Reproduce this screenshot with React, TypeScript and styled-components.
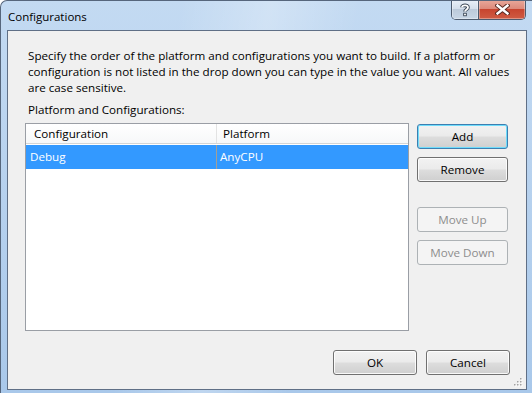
import * as React from "react";
import styled, { createGlobalStyle, css } from "styled-components";

const GlobalStyle = createGlobalStyle`
  html, body {
    margin: 0;
    padding: 0;
  }
  body {
    font-family: "Open Sans", "Noto Sans", sans-serif;
    font-size: 11.65px;
    color: #000;
    background: #ffffff;
  }
`;

const Window = styled.div`
  width: 532px;
  height: 393px;
  box-sizing: border-box;
  display: flex;
  flex-direction: column;
  border-left: 1px solid #56667c;
  border-top: 1px solid #56667c;
  border-top-left-radius: 7px;
  overflow: hidden;
  background:
    linear-gradient(100deg, rgba(255, 255, 255, 0) 30%, rgba(255, 255, 255, 0.25) 45%, rgba(255, 255, 255, 0) 60%),
    linear-gradient(180deg, #c3daf2 0%, #b9d3ef 40%, #a9c8ea 100%);
`;

const TitleBar = styled.div`
  height: 29px;
  display: flex;
  justify-content: space-between;
  align-items: flex-start;
  flex-shrink: 0;
`;

const Title = styled.div`
  padding: 8px 0 0 7px;
  line-height: 16px;
  font-size: 11.5px;
  color: #000;
`;

const CaptionGroup = styled.div`
  display: flex;
  margin: -1px 6px 0 0;
  height: 20px;
  box-sizing: border-box;
  border: 1px solid #4d5b6e;
  border-top: none;
  border-radius: 0 0 5px 5px;
  overflow: hidden;
`;

const CaptionButton = styled.div<{ $close?: boolean }>`
  display: flex;
  align-items: center;
  justify-content: center;
  width: ${({ $close }) => ($close ? "46px" : "26px")};
  box-shadow: inset 0 0 0 1px rgba(255, 255, 255, 0.35);
  ${({ $close }) =>
    $close
      ? css`
          background: linear-gradient(180deg, #e9a99b 0%, #dd8a7b 45%, #c8452f 50%, #cf5c44 100%);
        `
      : css`
          border-right: 1px solid #4d5b6e;
          background: linear-gradient(180deg, #e9f0f8 0%, #d5dfeb 45%, #bccada 50%, #c9d7e6 100%);
        `}
`;

const Client = styled.div`
  flex: 1;
  margin: 0 5px 3px 6px;
  border: 1px solid #5f6f86;
  background: #f0f0f0;
  position: relative;
  display: flex;
  flex-direction: column;
`;

const Description = styled.div`
  margin: 17px 0 0 20px;
  line-height: 16px;
`;

const Label = styled.div`
  margin: 6px 0 0 20px;
  line-height: 16px;
`;

const Body = styled.div`
  display: flex;
  align-items: flex-start;
  gap: 8px;
  margin: 5px 0 0 17px;
`;

const List = styled.div`
  width: 384px;
  height: 208px;
  box-sizing: border-box;
  border: 1px solid #9a9ea5;
  background: #ffffff;
`;

const Columns = styled.div`
  display: grid;
  grid-template-columns: 191px 1fr;
`;

const HeaderRow = styled(Columns)`
  height: 20px;
  box-sizing: border-box;
  border-bottom: 1px solid #d5d5d5;
  background: linear-gradient(180deg, #ffffff 0%, #f7f8f9 100%);
`;

const HeaderCell = styled.div<{ $first?: boolean }>`
  padding-left: ${({ $first }) => ($first ? "8px" : "6px")};
  line-height: 19px;
  border-right: ${({ $first }) => ($first ? "1px solid #e3e3e3" : "none")};
`;

const DataRow = styled(Columns)<{ $selected?: boolean }>`
  margin-top: 1px;
  height: 24px;
  background: ${({ $selected }) => ($selected ? "#3399ff" : "transparent")};
  color: ${({ $selected }) => ($selected ? "#ffffff" : "#000000")};
`;

const DataCell = styled.div<{ $first?: boolean }>`
  padding-left: ${({ $first }) => ($first ? "4px" : "3px")};
  line-height: 23px;
  border-right: ${({ $first }) => ($first ? "1px solid #a39f96" : "none")};
`;

const ButtonColumn = styled.div`
  display: flex;
  flex-direction: column;
  margin-top: 1px;
  width: 91px;
`;

const Button = styled.button<{ $default?: boolean; $gap?: number }>`
  height: 25px;
  width: 100%;
  margin-top: ${({ $gap }) => $gap ?? 0}px;
  padding: 0;
  box-sizing: border-box;
  font-family: inherit;
  font-size: 11.65px;
  color: #000;
  border: 1px solid #707070;
  border-radius: 3px;
  background: linear-gradient(180deg, #f2f2f2 0%, #ebebeb 48%, #dddddd 52%, #cfcfcf 100%);
  box-shadow: inset 0 0 0 1px rgba(255, 255, 255, 0.85);
  ${({ $default }) =>
    $default &&
    css`
      border-color: #3c7fb1;
      box-shadow: inset 0 0 0 1px #6fdcfb;
    `}
  &:disabled {
    color: #8d8d8d;
    border-color: #adb2b5;
    background: #f4f4f4;
    box-shadow: none;
  }
`;

const Footer = styled.div`
  display: flex;
  justify-content: flex-end;
  gap: 9px;
  margin: 19px 16px 0 0;
`;

const FooterButton = styled(Button)`
  width: 84px;
`;

const Grip = styled.svg`
  position: absolute;
  right: 3px;
  bottom: 2px;
`;

function HelpGlyph() {
  return (
    <svg width="12" height="14" viewBox="0 0 12 14">
      <path
        d="M3 4.2 C3 1.8 9 1.6 9 4.4 C9 6.4 6 6.4 6 8.6"
        fill="none"
        stroke="#3b4756"
        strokeWidth="3.6"
      />
      <path
        d="M3 4.2 C3 1.8 9 1.6 9 4.4 C9 6.4 6 6.4 6 8.6"
        fill="none"
        stroke="#ffffff"
        strokeWidth="1.8"
      />
      <rect x="4.2" y="9.8" width="3.6" height="3.4" fill="#3b4756" />
      <rect x="5.1" y="10.7" width="1.8" height="1.6" fill="#ffffff" />
    </svg>
  );
}

function CloseGlyph() {
  return (
    <svg width="15" height="11" viewBox="0 0 15 11">
      <path d="M2.5 1.5 L12.5 9.5 M12.5 1.5 L2.5 9.5" stroke="#5a2a22" strokeWidth="4.4" strokeLinecap="square" />
      <path d="M2.5 1.5 L12.5 9.5 M12.5 1.5 L2.5 9.5" stroke="#ffffff" strokeWidth="2.4" strokeLinecap="square" />
    </svg>
  );
}

function SizeGrip() {
  const dots = [
    [9, 1],
    [6, 4],
    [9, 4],
    [3, 7],
    [6, 7],
    [9, 7],
  ];
  return (
    <Grip width="12" height="10" viewBox="0 0 12 10">
      {dots.map(([x, y]) => (
        <React.Fragment key={`${x}-${y}`}>
          <rect x={x + 1} y={y + 1} width="1.5" height="1.5" fill="#ffffff" />
          <rect x={x} y={y} width="1.5" height="1.5" fill="#a3a3a3" />
        </React.Fragment>
      ))}
    </Grip>
  );
}

const rows = [{ configuration: "Debug", platform: "AnyCPU" }];

export default function App() {
  return (
    <>
      <GlobalStyle />
      <Window>
        <TitleBar>
          <Title>Configurations</Title>
          <CaptionGroup>
            <CaptionButton>
              <HelpGlyph />
            </CaptionButton>
            <CaptionButton $close>
              <CloseGlyph />
            </CaptionButton>
          </CaptionGroup>
        </TitleBar>
        <Client>
          <Description>
            Specify the order of the platform and configurations you want to build. If a platform or
            <br />
            configuration is not listed in the drop down you can type in the value you want. All values
            <br />
            are case sensitive.
          </Description>
          <Label>Platform and Configurations:</Label>
          <Body>
            <List>
              <HeaderRow>
                <HeaderCell $first>Configuration</HeaderCell>
                <HeaderCell>Platform</HeaderCell>
              </HeaderRow>
              {rows.map((row) => (
                <DataRow key={row.configuration} $selected>
                  <DataCell $first>{row.configuration}</DataCell>
                  <DataCell>{row.platform}</DataCell>
                </DataRow>
              ))}
            </List>
            <ButtonColumn>
              <Button $default>Add</Button>
              <Button $gap={8}>Remove</Button>
              <Button $gap={25} disabled>
                Move Up
              </Button>
              <Button $gap={8} disabled>
                Move Down
              </Button>
            </ButtonColumn>
          </Body>
          <Footer>
            <FooterButton>OK</FooterButton>
            <FooterButton>Cancel</FooterButton>
          </Footer>
          <SizeGrip />
        </Client>
      </Window>
    </>
  );
}
